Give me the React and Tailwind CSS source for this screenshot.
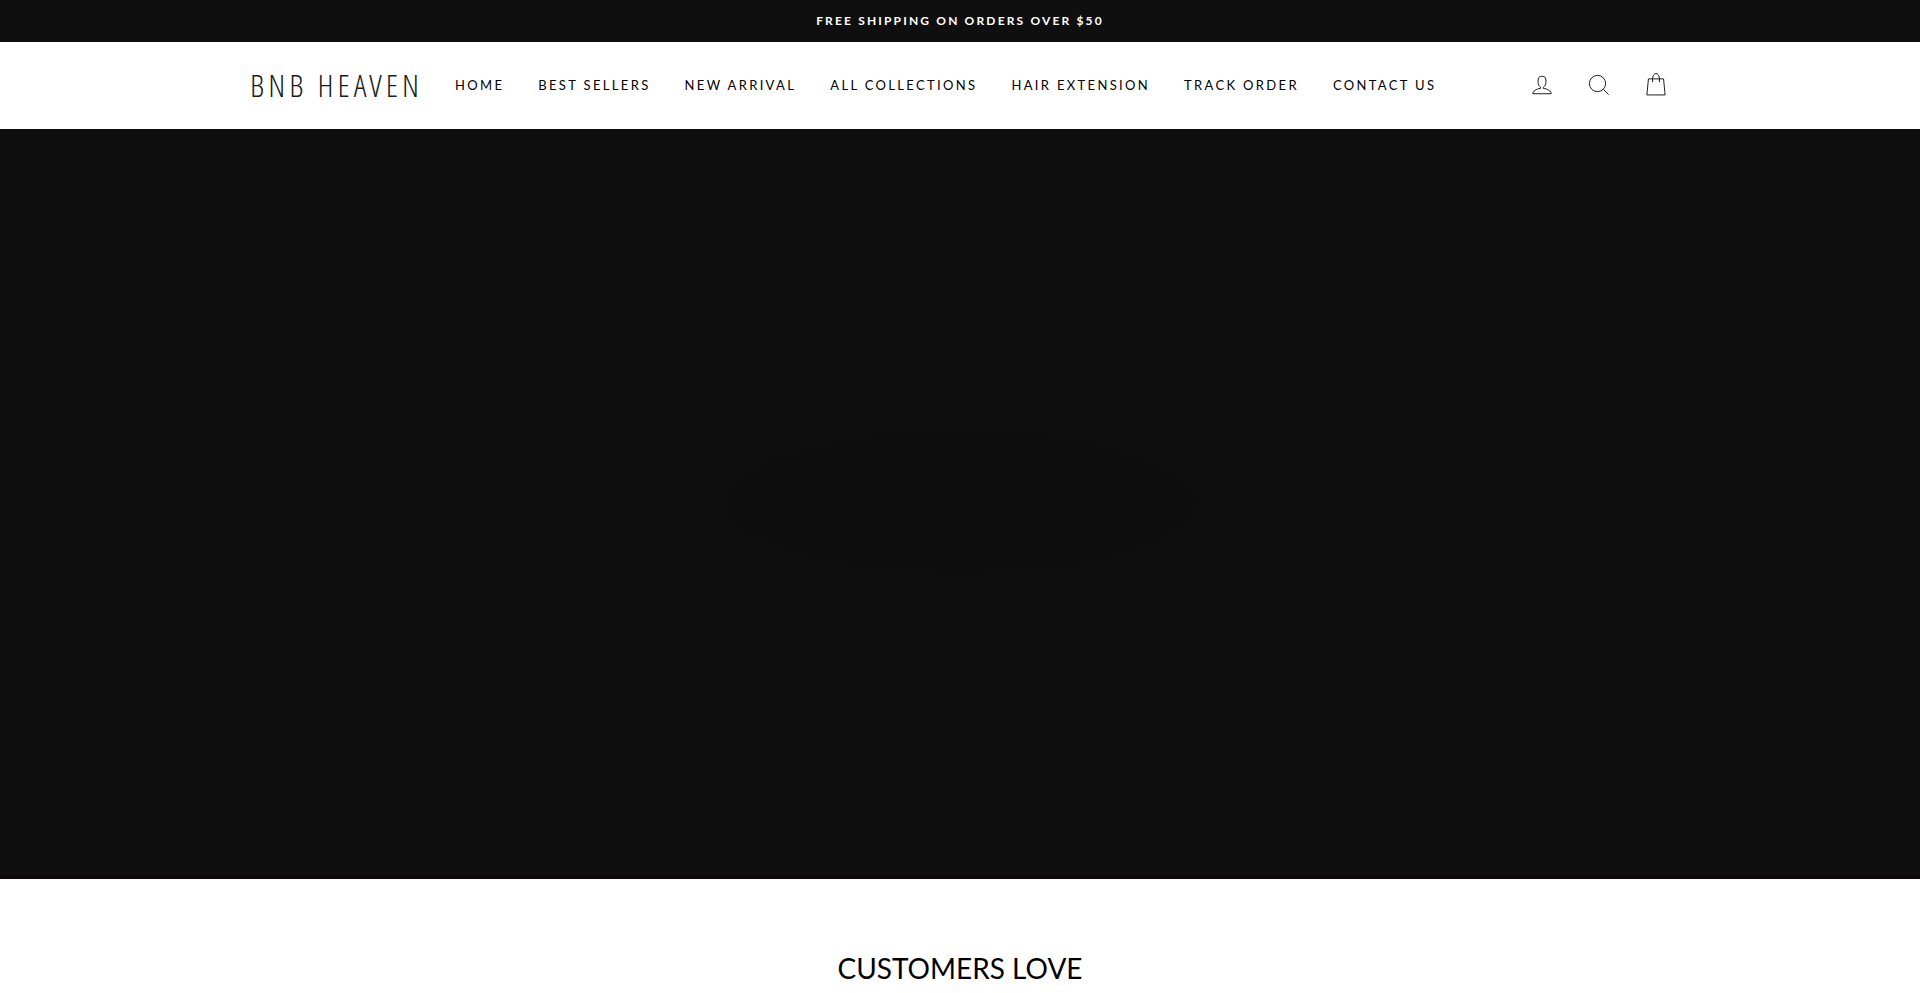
const navLinks = [
    'Home',
    'Best Sellers',
    'New Arrival',
    'All Collections',
    'Hair Extension',
    'Track Order',
    'Contact Us',
]

function AccountIcon() {
    return (
        <svg className="h-7 w-7" viewBox="0 0 64 64" fill="none" stroke="currentColor" strokeWidth="2" aria-hidden="true">
            <path d="M35 39.84v-2.53c3.3-1.91 6-6.66 6-11.41 0-7.63 0-13.82-9-13.82s-9 6.19-9 13.82c0 4.75 2.7 9.51 6 11.41v2.53c-10.18.85-18 6-18 12.16h42c0-6.19-7.82-11.31-18-12.16z" />
        </svg>
    )
}

function SearchIcon() {
    return (
        <svg className="h-7 w-7" viewBox="0 0 64 64" fill="none" stroke="currentColor" strokeWidth="2" aria-hidden="true">
            <path d="M47.16 28.58A18.58 18.58 0 1 1 28.58 10a18.58 18.58 0 0 1 18.58 18.58zM54 54L41.94 42" />
        </svg>
    )
}

function BagIcon() {
    return (
        <svg className="h-7 w-7" viewBox="0 0 64 64" fill="none" stroke="currentColor" strokeWidth="2" aria-hidden="true">
            <path d="M24.23 18c0-7.75 3.92-12.25 7.75-12.25S39.75 10.25 39.75 18M14.74 18h34.51l3.59 36.73H11.16zM24.23 18v7.44M39.75 18v7.44" />
        </svg>
    )
}

function AnnouncementBar() {
    return (
        <div className="bg-[#0f0f0f] py-3 text-center text-xs leading-[18px] font-bold tracking-[0.18em] text-white uppercase">
            <p>Free shipping on orders over $50</p>
        </div>
    )
}

function Header() {
    return (
        <header className="bg-white">
            <div className="mx-auto flex max-w-[1500px] items-center px-10 pt-[19px] pb-[21px]">
                <a
                    href="#"
                    className="w-[180px] shrink-0 font-['Open_Sans_Condensed_Light','Roboto_Condensed_Light','Roboto_Condensed','Liberation_Sans_Narrow','Open_Sans_Condensed',sans-serif] text-[32px] leading-[47px] font-light tracking-[4px] whitespace-nowrap text-[#1c1c1c]"
                >
                    BNB HEAVEN
                </a>
                <nav className="ml-2 flex flex-1 items-center" aria-label="Main">
                    {navLinks.map((link) => (
                        <a key={link} href="#" className="px-[17px] text-[13px] leading-5 tracking-[0.18em] whitespace-nowrap uppercase hover:underline">
                            {link}
                        </a>
                    ))}
                </nav>
                <div className="flex items-center gap-[29px]">
                    <button type="button" aria-label="Log in"><AccountIcon /></button>
                    <button type="button" aria-label="Search"><SearchIcon /></button>
                    <button type="button" aria-label="Cart"><BagIcon /></button>
                </div>
            </div>
        </header>
    )
}

function Hero() {
    return (
        <section
            aria-label="Slideshow"
            className="h-[750px] border-b-4 border-[#0d090b] bg-[#0f0f0f] bg-[radial-gradient(ellipse_540px_162px_at_center,#0c0c0c,#0f0f0f)]"
        />
    )
}

export default function App() {
    return (
        <div className="min-h-screen overflow-x-hidden bg-white font-['Lato',sans-serif] text-black">
            <AnnouncementBar />
            <Header />
            <main>
                <Hero />
                <section className="px-10 pt-[71px] text-center">
                    <h2 className="text-[28px] leading-9 uppercase">Customers love</h2>
                </section>
            </main>
        </div>
    )
}
